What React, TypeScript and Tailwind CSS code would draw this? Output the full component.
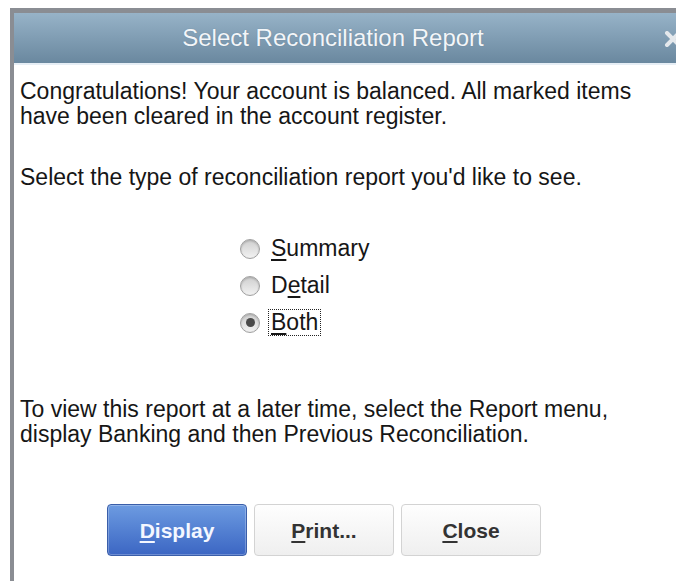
import React from "react";

const FONT = { fontFamily: '"Liberation Sans", Arial, sans-serif' };

function Radio({ checked }: { checked?: boolean }) {
  return (
    <span className="flex h-[20px] w-[20px] shrink-0 items-center justify-center rounded-full border border-[#a0a0a0] bg-gradient-to-b from-[#cfcfcf] to-[#f2f2f2] shadow-[inset_0_1px_2px_rgba(0,0,0,0.2)]">
      {checked && <span className="h-[9px] w-[9px] rounded-full bg-[#4a4a4a]" />}
    </span>
  );
}

function Option({
  before,
  key1,
  after,
  checked,
}: {
  before?: string;
  key1: string;
  after: string;
  checked?: boolean;
}) {
  return (
    <div className="flex h-[37px] items-center">
      <Radio checked={checked} />
      <span
        className={
          "ml-[8px] px-[2px] leading-[25px] border " +
          (checked ? "border-dotted border-[#222]" : "border-transparent")
        }
      >
        {before}
        <span className="underline underline-offset-[3px]">{key1}</span>
        {after}
      </span>
    </div>
  );
}

function Button({
  k,
  rest,
  primary,
}: {
  k: string;
  rest: string;
  primary?: boolean;
}) {
  return (
    <button
      className={
        "flex h-[52px] w-[140px] items-center justify-center rounded-[4px] border text-[21px] font-bold " +
        (primary
          ? "border-[#3a5ea9] bg-gradient-to-b from-[#6d9be1] to-[#3c66c3] text-[#f4f7ff] shadow-[inset_0_0_0_1px_rgba(255,255,255,0.25)]"
          : "border-[#d3d3d3] bg-gradient-to-b from-[#fefefe] to-[#efefef] text-[#333]")
      }
      style={FONT}
    >
      <span className="underline underline-offset-[3px]">{k}</span>
      {rest}
    </button>
  );
}

export default function App() {
  return (
    <div className="h-[581px] w-[676px] overflow-hidden bg-white pl-[10px] pt-[8px]" style={FONT}>
      <div className="flex h-full flex-col border-l-4 border-t-[5px] border-[#8a8d93]">
        {/* title bar */}
        <div className="relative flex h-[50px] shrink-0 items-center justify-center bg-gradient-to-b from-[#97b3c8] to-[#6a889f] pr-[24px]">
          <span className="text-[24px] text-[#f3f6f9] [text-shadow:0_0_1px_rgba(60,80,100,0.4)]">
            Select Reconciliation Report
          </span>
          {/* close glyph, partly past the right edge */}
          <svg
            className="absolute left-[650px] top-[18px] blur-[0.5px]"
            width="18"
            height="16"
            viewBox="0 0 18 16"
          >
            <path d="M3 2 L15 14 M15 2 L3 14" stroke="#e4e8ec" strokeWidth="4" strokeLinecap="round" />
          </svg>
        </div>
        <div className="h-[2px] shrink-0 bg-[#e6eef5]" />

        {/* body */}
        <div className="flex flex-col pl-[6px] pt-[14px] text-[23px] leading-[25px] text-[#161616]">
          <p>
            Congratulations! Your account is balanced. All marked items
            <br />
            have been cleared in the account register.
          </p>
          <p className="mt-[36px]">Select the type of reconciliation report you'd like to see.</p>

          <div className="ml-[220px] mt-[40px] flex flex-col">
            <Option key1="S" after="ummary" />
            <Option before="D" key1="e" after="tail" />
            <Option key1="B" after="oth" checked />
          </div>

          <p className="mt-[56px]">
            To view this report at a later time, select the Report menu,
            <br />
            display Banking and then Previous Reconciliation.
          </p>

          <div className="ml-[87px] mt-[57px] flex gap-[7px]">
            <Button k="D" rest="isplay" primary />
            <Button k="P" rest="rint..." />
            <Button k="C" rest="lose" />
          </div>
        </div>
      </div>
    </div>
  );
}
